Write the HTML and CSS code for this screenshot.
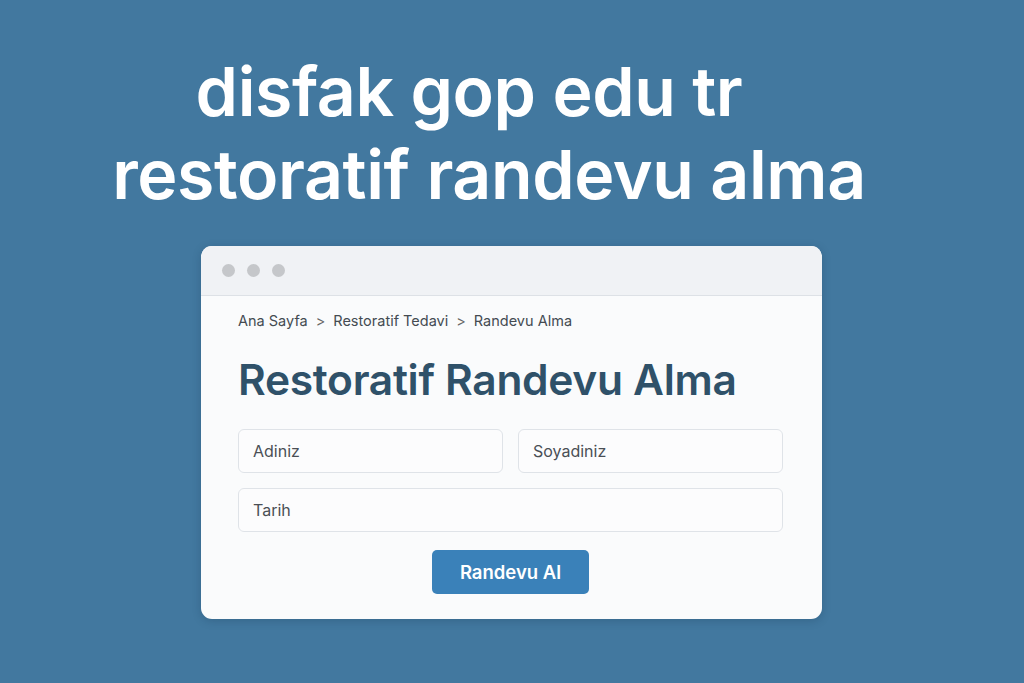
FILE: index.html
```html
<!DOCTYPE html>
<html lang="tr">
<head>
  <meta charset="utf-8">
  <link rel="stylesheet" href="styles.css">
  <title>disfak gop edu tr restoratif randevu alma</title>
</head>
<body>
  <h1 class="headline">
    <span class="line line-top">disfak gop edu tr</span>
    <span class="line">restoratif randevu alma</span>
  </h1>

  <div class="window">
    <div class="window-bar">
      <span class="dot"></span>
      <span class="dot"></span>
      <span class="dot"></span>
    </div>
    <div class="window-body">
      <nav class="crumbs">
        <span>Ana Sayfa</span>
        <span class="sep">&gt;</span>
        <span>Restoratif Tedavi</span>
        <span class="sep">&gt;</span>
        <span>Randevu Alma</span>
      </nav>
      <h2 class="page-title">Restoratif Randevu Alma</h2>
      <form class="form">
        <input class="field" type="text" placeholder="Adiniz">
        <input class="field" type="text" placeholder="Soyadiniz">
        <input class="field wide" type="text" placeholder="Tarih">
        <div class="actions">
          <button class="btn" type="button">Randevu Al</button>
        </div>
      </form>
    </div>
  </div>
</body>
</html>
```

FILE: styles.css
```css
html, body { margin: 0; padding: 0; }

body {
  background: #42789f;
  font-family: Inter, "Noto Sans", sans-serif;
  height: 683px;
  overflow: hidden;
}

.headline {
  margin: 0;
  padding: 50px 46px 0 0;
  text-align: center;
  color: #fff;
  font-size: 68px;
  font-weight: 600;
  line-height: 83px;
  letter-spacing: -0.4px;
}
.headline .line { display: block; }
.headline .line-top { padding-right: 40px; }

.window {
  width: 621px;
  margin: 30px 0 0 201px;
  background: #fafbfc;
  border-radius: 11px;
  overflow: hidden;
  box-shadow: 0 2px 8px rgba(20, 50, 80, 0.25);
}

.window-bar {
  height: 49px;
  background: #f0f2f5;
  border-bottom: 1px solid #dde1e6;
  display: flex;
  align-items: center;
  gap: 12px;
  padding-left: 21px;
}

.dot {
  width: 13px;
  height: 13px;
  border-radius: 50%;
  background: #c5c7ca;
}

.window-body {
  padding: 16px 39px 25px 37px;
}

.crumbs {
  display: flex;
  gap: 8px;
  font-size: 14.5px;
  color: #444b52;
  line-height: 18px;
}
.crumbs .sep { color: #666; }

.page-title {
  margin: 25px 0 24px;
  font-size: 42.5px;
  font-weight: 600;
  line-height: 50px;
  color: #2f5169;
  letter-spacing: -0.3px;
}

.form {
  display: grid;
  grid-template-columns: 1fr 1fr;
  gap: 15px;
}

.field {
  width: 100%;
  min-width: 0;
  height: 44px;
  box-sizing: border-box;
  border: 1px solid #dfe3e8;
  border-radius: 6px;
  background: #fcfcfd;
  padding: 0 14px;
  font-family: inherit;
  font-size: 16px;
  color: #333;
}
.field::placeholder { color: #4a4f55; }

.field.wide { grid-column: 1 / 3; }

.actions {
  grid-column: 1 / 3;
  display: flex;
  justify-content: center;
  padding-top: 3px;
}

.btn {
  width: 157px;
  height: 44px;
  border: 0;
  border-radius: 5px;
  background: #3a81b9;
  color: #fff;
  font-family: inherit;
  font-size: 18.5px;
  font-weight: 600;
}
```
